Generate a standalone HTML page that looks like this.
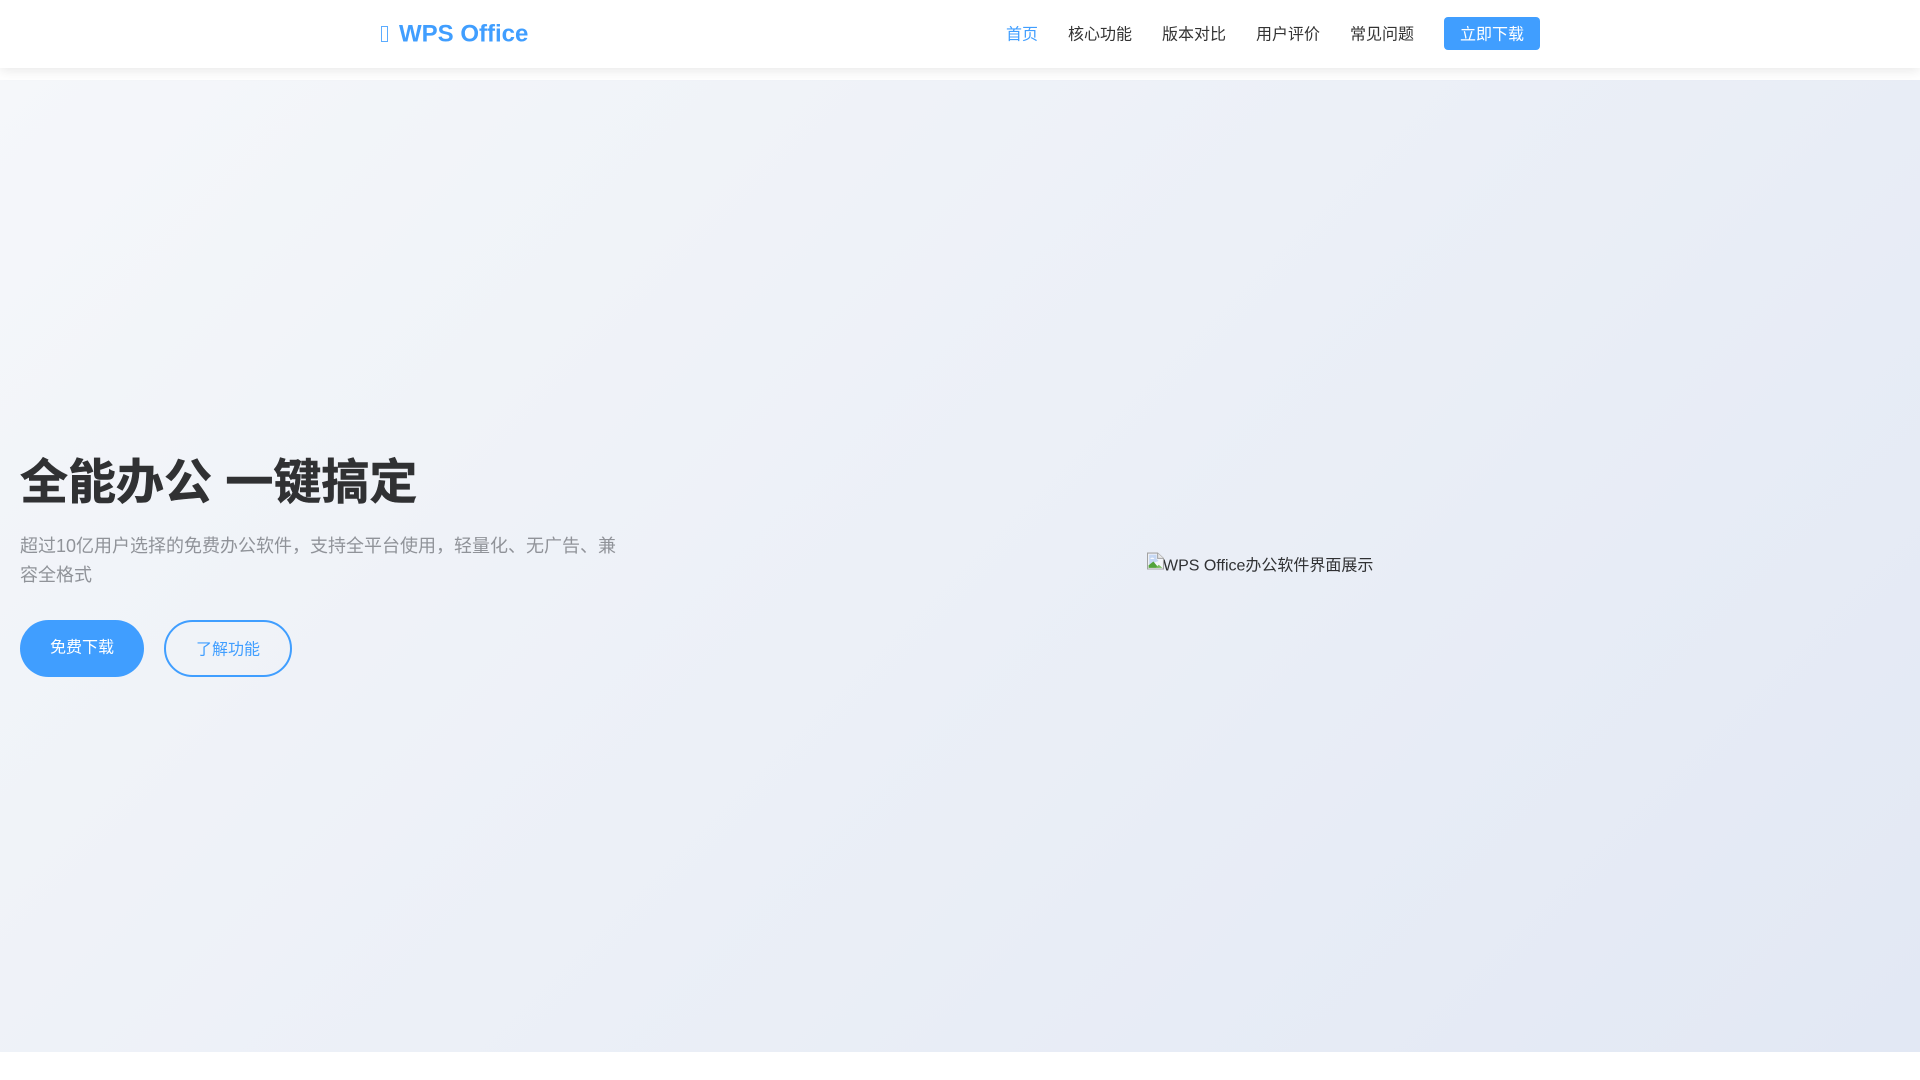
<!DOCTYPE html>
<html lang="zh-CN">
<head>
<meta charset="utf-8">
<title>WPS Office</title>
<style>
*{margin:0;padding:0;box-sizing:border-box}
html,body{width:1920px;height:1080px;overflow:hidden;background:#fff}
body{position:relative;font-family:"Liberation Sans","Noto Sans CJK SC",sans-serif;color:#333;line-height:1.6}
a{text-decoration:none;color:inherit}
.t{display:inline-block;will-change:transform;transform:translateY(1.5px)}
.nav{position:absolute;left:0;top:0;width:1920px;height:68px;background:#fff;box-shadow:0 2px 12px rgba(0,0,0,.1);z-index:2}
.logo{position:absolute;left:399px;top:15px;font-size:24px;font-weight:700;color:#409eff;line-height:38.4px;white-space:nowrap;will-change:transform;transform:translateY(.5px)}
.tofu{position:absolute;left:381px;top:26px;width:7px;height:16px;border:1px solid #409eff;opacity:.85}
.links{position:absolute;right:380px;top:17px;display:flex;gap:30px;align-items:center;font-size:16px;height:33px;white-space:nowrap}
.links a.on{color:#409eff}
.links a.dl{background:#409eff;color:#fff;border-radius:4px;padding:4px 16px;height:33px}
.hero{position:absolute;left:0;top:80px;width:1920px;height:972px;background:linear-gradient(135deg,#f5f7fa 0%,#e2e8f4 100%)}
h1{position:absolute;left:20px;top:372px;font-size:48px;line-height:62.4px;font-weight:700;color:#303133;white-space:nowrap;-webkit-text-stroke:.6px #303133;will-change:transform;transform:translateY(.5px)}
.sub{position:absolute;left:20px;top:450px;width:600px;font-size:18px;line-height:28.8px;color:#909399;will-change:transform;transform:translateY(2px)}
.btn{position:absolute;top:540px;height:57px;border-radius:30px;font-size:16px;text-align:center}
.b1{left:20px;width:124px;background:#409eff;color:#fff;padding-top:14px}
.b2{left:164px;width:128px;border:2px solid #409eff;color:#409eff;padding-top:14px}
.alt{position:absolute;left:1147px;top:471px;height:26px;font-size:16px;line-height:25.6px;color:#303133;white-space:nowrap;padding-left:16px;will-change:transform;transform:translateY(2.5px)}
.alt svg{position:absolute;left:0;top:-1px;width:17px;height:17px}
</style>
</head>
<body>
<div class="nav">
  <span class="tofu"></span>
  <a class="logo" href="#">WPS Office</a>
  <div class="links">
    <a class="on" href="#"><span class="t">首页</span></a>
    <a href="#"><span class="t">核心功能</span></a>
    <a href="#"><span class="t">版本对比</span></a>
    <a href="#"><span class="t">用户评价</span></a>
    <a href="#"><span class="t">常见问题</span></a>
    <a class="dl" href="#"><span class="t">立即下载</span></a>
  </div>
</div>
<div class="hero">
  <h1>全能办公 一键搞定</h1>
  <p class="sub">超过10亿用户选择的免费办公软件，支持全平台使用，轻量化、无广告、兼容全格式</p>
  <a class="btn b1" href="#"><span class="t">免费下载</span></a>
  <a class="btn b2" href="#"><span class="t">了解功能</span></a>
  <div class="alt">
    <svg viewBox="0 0 16 16" xmlns="http://www.w3.org/2000/svg">
      <path d="M0.5 15.500V0.500H10L15.500 5.500V15.500Z" fill="#f4f6fa" stroke="#a3a3a3" stroke-width="1"/>
      <path d="M10 0.500V5.500H15.500" fill="#e8e8e8" stroke="#a3a3a3" stroke-width="1"/>
      <path d="M2 2H9V6L11 8L2 11Z" fill="#c6d8f4"/>
      <path d="M3 6C4 4.500 6 4.500 7 6Z" fill="#fff"/>
      <path d="M1.500 14.500V12L6 8.500L11 14.500Z" fill="#52a33a"/>
      <path d="M8 14.500L11 11.500L14.500 14.500Z" fill="#7cbf60"/>
    </svg>WPS Office办公软件界面展示</div>
</div>
</body>
</html>
